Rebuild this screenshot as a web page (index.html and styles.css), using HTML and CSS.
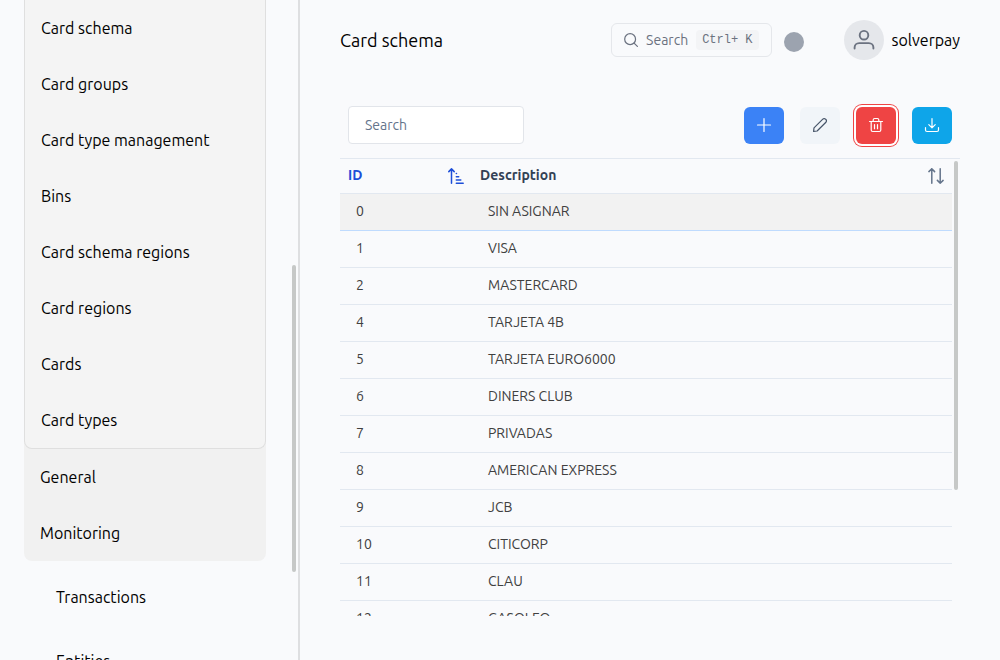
FILE: index.html
```html
<!DOCTYPE html>
<html lang="en">
<head>
<meta charset="utf-8">
<meta name="viewport" content="width=device-width, initial-scale=1">
<title>Card schema</title>
<link rel="stylesheet" href="styles.css">
</head>
<body>
<div class="app">
  <aside class="sidebar">
    <nav class="nav">
      <div class="nav-group">
        <div class="nav-sub">
          <a class="nav-link" href="#">Card schema</a>
          <a class="nav-link" href="#">Card groups</a>
          <a class="nav-link" href="#">Card type management</a>
          <a class="nav-link" href="#">Bins</a>
          <a class="nav-link" href="#">Card schema regions</a>
          <a class="nav-link" href="#">Card regions</a>
          <a class="nav-link" href="#">Cards</a>
          <a class="nav-link" href="#">Card types</a>
        </div>
        <a class="nav-link" href="#">General</a>
        <a class="nav-link" href="#">Monitoring</a>
      </div>
      <a class="nav-link nav-root" href="#">Transactions</a>
      <a class="nav-link nav-root" href="#">Entities</a>
    </nav>
    <div class="thumb thumb-side"></div>
  </aside>
  <main class="main">
    <header class="header">
      <h1 class="title">Card schema</h1>
      <button class="finder" type="button">
        <svg class="finder-icon" viewBox="0 0 16 16" fill="none" stroke="currentColor" stroke-width="1.4" stroke-linecap="round"><circle cx="7" cy="7" r="6.2"/><path d="M11.500 11.500 15.300 15.300"/></svg>
        <span>Search</span>
        <kbd class="keys">Ctrl+ K</kbd>
      </button>
      <span class="status"></span>
      <div class="user">
        <span class="avatar"><svg width="22" height="22" viewBox="0 0 22 22" fill="none" stroke="currentColor" stroke-width="1.9" stroke-linecap="round"><circle cx="11" cy="6.2" r="4.3"/><path d="M1.6 19.6v-1.200c0-2.400 1.800-4.300 4.600-4.300h9.600c2.800 0 4.600 1.900 4.600 4.300v1.200"/></svg></span>
        <span>solverpay</span>
      </div>
    </header>
    <div class="toolbar">
      <input class="filter" type="search" placeholder="Search" aria-label="Search">
      <div class="actions">
        <button class="btn btn-add" type="button" aria-label="Add"><svg viewBox="0 0 14 14"><path d="M7 .5v13M.5 7h13"/></svg></button>
        <button class="btn btn-edit" type="button" aria-label="Edit"><svg viewBox="0 0 14 14"><path d="M.6 13.400 1 9.900 9.800 1.100a1.900 1.900 0 0 1 2.700 0l.4.4a1.900 1.900 0 0 1 0 2.700L4.100 13Z"/></svg></button>
        <button class="btn btn-delete" type="button" aria-label="Delete"><svg viewBox="0 0 14 14"><path d="M.5 3.500h13M2.200 3.500v8.500c0 .9.600 1.500 1.500 1.500h6.600c.9 0 1.500-.6 1.500-1.500V3.500M4.200 3.500V2c0-.9.500-1.500 1.400-1.500h2.800c.9 0 1.400.6 1.400 1.500v1.500M5.500 6.500v4.200M8.500 6.500v4.200"/></svg></button>
        <button class="btn btn-export" type="button" aria-label="Download"><svg viewBox="0 0 14 14"><path d="M7 .5v9.300M3.800 6.700 7 9.900l3.200-3.200M.5 9.500V12c0 .9.600 1.500 1.500 1.500h10c.9 0 1.500-.6 1.500-1.500V9.500"/></svg></button>
      </div>
    </div>
    <section class="grid">
      <table class="table">
        <thead>
          <tr>
            <th class="col-id sorted"><div class="head">ID<svg width="16" height="18" viewBox="0 0 16 18" fill="none" stroke="currentColor" stroke-width="1.500" stroke-linecap="round" stroke-linejoin="round"><path d="M3.500 17.200V2.900M.8 5.600 3.500 2.900l2.700 2.700M8.300 7.500h.2M8.300 10.800h2.400M8.300 14h4.500M8.300 17.200h6.900"/></svg></div></th>
            <th><div class="head">Description<svg width="16" height="18" viewBox="0 0 16 18" fill="none" stroke="currentColor" stroke-width="1.500" stroke-linecap="round" stroke-linejoin="round"><path d="M3.800 17.200V2.800M.9 5.600 3.800 2.800l2.800 2.800M12.200 2.800v14.400M9.400 14.400l2.800 2.800 2.900-2.800"/></svg></div></th>
          </tr>
        </thead>
        <tbody>
          <tr class="active"><td>0</td><td>SIN ASIGNAR</td></tr>
          <tr><td>1</td><td>VISA</td></tr>
          <tr><td>2</td><td>MASTERCARD</td></tr>
          <tr><td>4</td><td>TARJETA 4B</td></tr>
          <tr><td>5</td><td>TARJETA EURO6000</td></tr>
          <tr><td>6</td><td>DINERS CLUB</td></tr>
          <tr><td>7</td><td>PRIVADAS</td></tr>
          <tr><td>8</td><td>AMERICAN EXPRESS</td></tr>
          <tr><td>9</td><td>JCB</td></tr>
          <tr><td>10</td><td>CITICORP</td></tr>
          <tr><td>11</td><td>CLAU</td></tr>
          <tr><td>12</td><td>GASOLEO</td></tr>
        </tbody>
      </table>
      <div class="thumb thumb-grid"></div>
    </section>
  </main>
</div>
</body>
</html>
```
FILE: styles.css
```css
* { box-sizing: border-box; }
body {
  margin: 0;
  background: #f9fafc;
  color: #000;
  font: 16px/24px Ubuntu, "Noto Sans", sans-serif;
}
button, input { font: inherit; }
.app { display: flex; height: 100vh; overflow: hidden; }

.sidebar {
  position: relative;
  flex: 0 0 300px;
  overflow: hidden;
  padding: 0 32px 0 24px;
  border-right: 2px solid #dedfe1;
}
.nav { display: flex; flex-direction: column; gap: 8px; }
.nav-group { background: #f1f1f1; border-radius: 0 0 8px 8px; }
.nav-sub {
  background: #f4f4f4;
  border: 1px solid #dfdfdf;
  border-top: 0;
  border-radius: 0 0 8px 8px;
}
.nav-link { display: block; padding: 16px; color: #000; text-decoration: none; }
.nav-root { padding-left: 32px; }

.thumb { position: absolute; width: 4px; border-radius: 2px; background: #c6c8c7; }
.thumb-side { right: 2px; top: 265px; height: 307px; }
.thumb-grid { right: 2px; top: 2px; height: 329px; }

.main {
  flex: 1;
  min-width: 0;
  display: flex;
  flex-direction: column;
  padding: 20px 40px 44px;
}
.header { display: flex; align-items: center; height: 40px; }
.title { flex: 1; margin: 0; font-size: 18px; font-weight: 400; }
.finder {
  display: flex;
  align-items: center;
  gap: 8px;
  height: 34px;
  padding: 0 12px;
  border: 1px solid #e5e7eb;
  border-radius: 6px;
  background: transparent;
  color: #6b7280;
  font-size: 14px;
}
.finder-icon { width: 14px; height: 14px; overflow: visible; }
.keys {
  padding: 0 6px;
  border-radius: 4px;
  background: #f3f4f6;
  font: 12px/20px "Liberation Mono", monospace;
}
.status { width: 20px; height: 20px; margin: 4px 40px 0 12px; border-radius: 50%; background: #9ca3af; }
.user { display: flex; align-items: center; gap: 8px; }
.avatar {
  display: grid;
  place-items: center;
  width: 40px;
  height: 40px;
  border-radius: 50%;
  background: #e5e7eb;
  color: #6b7280;
}

.toolbar { display: flex; justify-content: space-between; align-items: center; padding: 46px 8px 14px; }
.filter {
  width: 176px;
  height: 38px;
  padding: 0 16px;
  border: 1px solid #e2e5ea;
  border-radius: 4px;
  background: #fff;
  font-size: 14px;
}
.filter::placeholder { color: #64748b; opacity: 1; }
.actions { display: flex; gap: 16px; }
.btn {
  display: grid;
  place-items: center;
  width: 40px;
  height: 37px;
  padding: 0;
  border: 0;
  border-radius: 6px;
  color: #fff;
}
.btn svg { width: 14px; height: 14px; overflow: visible; fill: none; stroke: currentColor; stroke-width: 1.2; stroke-linecap: round; stroke-linejoin: round; }
.btn-add { background: #3b82f6; }
.btn-edit { background: #f1f5f9; color: #475569; }
.btn-delete { background: #ef4444; box-shadow: 0 0 0 2px #fff, 0 0 0 3px #ef4444; }
.btn-export { background: #0ea5e9; }

.grid {
  position: relative;
  flex: 1;
  min-height: 0;
  overflow: hidden;
  padding-right: 8px;
  border-top: 1px solid #e2e8f0;
}
.table {
  width: 100%;
  table-layout: fixed;
  border-collapse: separate;
  border-spacing: 0;
  font-size: 14px;
  line-height: 20px;
  text-align: left;
}
.table th { height: 35px; padding: 0 8px 2px; border-bottom: 1px solid #e2e8f0; color: #334155; font-weight: 600; }
.table td { height: 37px; padding: 0 16px 2px; border-bottom: 1px solid #e2e8f0; color: #404040; }
.table .col-id { width: 132px; }
.table .sorted { color: #1d4ed8; }
.head { display: flex; justify-content: space-between; align-items: center; }
.head svg { color: #64748b; }
.sorted svg { color: inherit; }
.active td { background: #f2f2f2; border-bottom-color: #bfdbfe; }
```
